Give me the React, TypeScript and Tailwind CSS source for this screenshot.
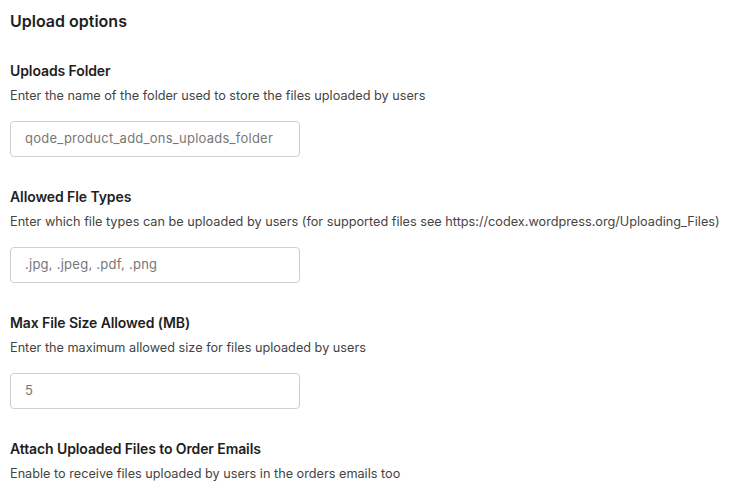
import React from "react";

const sections = [
  {
    label: "Uploads Folder",
    desc: "Enter the name of the folder used to store the files uploaded by users",
    value: "qode_product_add_ons_uploads_folder",
  },
  {
    label: "Allowed Fle Types",
    desc: "Enter which file types can be uploaded by users (for supported files see https://codex.wordpress.org/Uploading_Files)",
    value: ".jpg, .jpeg, .pdf, .png",
  },
  {
    label: "Max File Size Allowed (MB)",
    desc: "Enter the maximum allowed size for files uploaded by users",
    value: "5",
  },
  {
    label: "Attach Uploaded Files to Order Emails",
    desc: "Enable to receive files uploaded by users in the orders emails too",
  },
];

export default function App() {
  return (
    <div
      className="w-[746px] h-[497px] overflow-hidden bg-white pl-[10px] pt-[9px]"
      style={{ fontFamily: "Inter, 'Noto Sans', sans-serif" }}
    >
      <h2 className="text-[16px] leading-[24px] font-semibold text-[#1e1e1e]">Upload options</h2>
      <div className="flex flex-col gap-[30px] mt-[28px]">
        {sections.map((s) => (
          <div key={s.label} className="flex flex-col">
            <div className="text-[14px] leading-[20px] font-semibold text-[#1e1e1e] tracking-[-0.1px]">{s.label}</div>
            <div className="mt-[5px] text-[12.7px] leading-[20px] text-[#444]">{s.desc}</div>
            {s.value !== undefined && (
              <div className="mt-[15px] w-[290px] h-[36px] border border-[#cfcfcf] rounded-[4px] flex items-center pl-[14px] text-[13px] text-[#777] tracking-[0.25px]">
                {s.value}
              </div>
            )}
          </div>
        ))}
      </div>
    </div>
  );
}
